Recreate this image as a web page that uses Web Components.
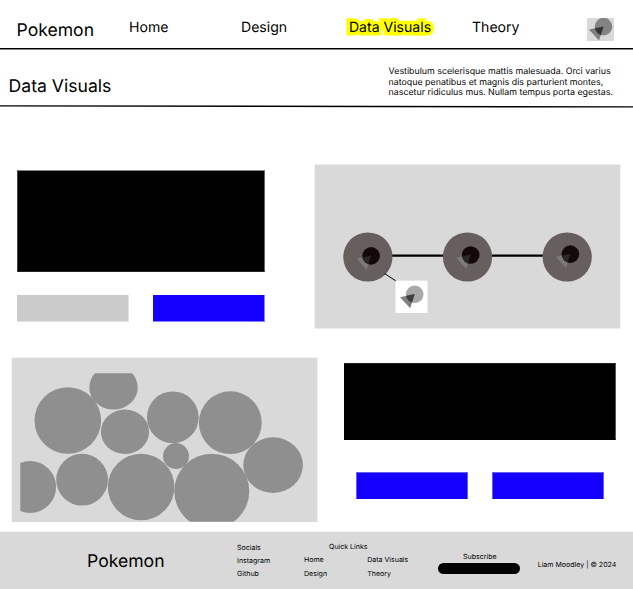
<!DOCTYPE html>
<html lang="en">
<head>
<meta charset="utf-8">
<title>Pokemon – Data Visuals</title>
<style>
html,body{margin:0;background:#fff;color:#000;font-family:Inter,"Liberation Sans",sans-serif;text-rendering:geometricPrecision}
body{width:633px;height:589px;overflow:hidden}
</style>
</head>
<body>
<pk-page></pk-page>
<script>
const define = (name, html) => customElements.define(name, class extends HTMLElement {
  constructor() {
    super();
    this.attachShadow({mode: 'open'});
    const t = document.createElement('template');
    t.innerHTML = html;
    this.shadowRoot.append(t.content.cloneNode(true));
  }
});

define('pk-logo', `<style>:host{display:block;font-size:17.6px;line-height:22px;white-space:nowrap}</style><slot></slot>`);

define('pk-emblem', `<style>:host{display:block;width:27px;height:23px}svg{display:block}</style>
<svg width="27" height="23" viewBox="587 18 27 23">
<clipPath id="c"><circle cx="603.5" cy="26.6" r="8.8"/></clipPath>
<rect x="587" y="18" width="27" height="23" fill="#d9d9d9"/>
<circle cx="603.5" cy="26.6" r="8.8" fill="#848484"/>
<path d="M589 29.4 603.6 26.6 599 40.6Z" fill="#7d7d7d"/>
<path d="M589 29.4 603.6 26.6 599 40.6Z" fill="#333" clip-path="url(#c)"/></svg>`);

define('pk-header', `<style>
:host{display:grid;box-sizing:border-box;height:50px;grid-template-columns:112px 112px 105px 126px 115px 27px;padding-left:17px;
border-bottom:1px solid #888;box-shadow:inset 0 -1px #000;font-size:14.08px;line-height:18px;align-items:start;white-space:nowrap}
pk-logo{margin-top:20px;margin-left:-.5px}span{padding-top:19px}pk-emblem{margin-top:18px}
svg{display:block;margin-top:14px}text{font:14.08px Inter,"Liberation Sans",sans-serif}
</style>
<pk-logo>Pokemon</pk-logo><span>Home</span><span>Design</span>
<svg width="100" height="26"><text x="2.9" y="18.3" fill="#000" stroke="#ff0" stroke-width="7" stroke-linejoin="miter" stroke-miterlimit="1.9" paint-order="stroke">Data Visuals</text></svg>
<span>Theory</span><pk-emblem></pk-emblem>`);

define('pk-intro', `<style>
:host{display:block;height:60px}
.row{display:grid;grid-template-columns:380px 1fr;padding-left:8.6px;height:54px}
h1{margin:26px 0 0;font-weight:400;font-size:17.6px;line-height:22px}
p{margin:17px 0 0;font-size:8.84px;line-height:10.6px;white-space:nowrap}
svg{display:block}
</style>
<div class="row"><h1>Data Visuals</h1><p>Vestibulum scelerisque mattis malesuada. Orci varius<br>natoque penatibus et magnis dis parturient montes,<br>nascetur ridiculus mus. Nullam tempus porta egestas.</p></div>
<svg width="633" height="6"><path d="M0 1.9 633 2.9" stroke="#000" stroke-width="1.4"/></svg>`);

define('pk-button', `<style>:host{display:block;box-sizing:border-box;width:112px;height:27px;background:#1400ff;border:solid #8a80ff;border-width:0 1px 1px 0}
:host([muted]){background:#cbcbcb;border-color:#e2e2e2}
:host([inset]){border-color:#6a60e8;border-width:1px 1px 0 1px}</style>`);

define('pk-card', `<style>:host{display:flex;flex-direction:column;align-items:center}
.block{box-sizing:border-box;width:var(--w);height:var(--h);background:#000;border:1px solid;border-color:var(--edges)}
.actions{display:flex;gap:24px;margin-top:var(--gap)}</style>
<div class="block"></div><div class="actions"><slot></slot></div>`);

const inner = (cx, cy, id) => {
  const d = `M${cx-14.4} ${cy+2.7} ${cx} ${cy-.4} ${cx-4.4} ${cy+14}Z`;
  return `<clipPath id="${id}"><circle cx="${cx}" cy="${cy}" r="8.8"/></clipPath>
<path d="${d}" fill="#7c7b7b"/><circle cx="${cx}" cy="${cy}" r="8.8" fill="#140809"/><path d="${d}" fill="#292828" clip-path="url(#${id})"/>`;
};
define('pk-evolution', `<style>:host{display:block}svg{display:block}</style>
<svg width="307" height="165" viewBox="314 164 307 165">
<rect x="314.65" y="164.5" width="305.7" height="164" fill="#d9d9d9"/>
<path d="M368 255.6H567" stroke="#000" stroke-width="2.2"/>
<g fill="#675e5e"><circle cx="367.9" cy="257" r="24.6"/><circle cx="467.5" cy="257" r="24.6"/><circle cx="567.2" cy="257" r="24.6"/></g>
${inner(371.1,255.9,'a')}${inner(470.7,255,'b')}${inner(570.4,254.1,'d')}
<path d="M384.6 273.6 396 281" stroke="#000" stroke-width="1"/>
<rect x="395.5" y="280.6" width="32" height="32.4" fill="#fff"/>
<clipPath id="e"><circle cx="414.7" cy="294.3" r="8.8"/></clipPath>
<circle cx="414.7" cy="294.3" r="8.8" fill="#a9a9a9"/>
<path d="M400 297.2 414.7 294 410.2 308.2Z" fill="#808080"/>
<path d="M400 297.2 414.7 294 410.2 308.2Z" fill="#404040" clip-path="url(#e)"/></svg>`);

define('pk-bubbles', `<style>:host{display:block}svg{display:block}</style>
<svg width="307" height="165" viewBox="11 357 307 165">
<rect x="11.7" y="357.7" width="305.7" height="164.3" fill="#d9d9d9"/>
<clipPath id="f"><rect x="20.3" y="373.2" width="290" height="148.6"/></clipPath>
<g fill="#8f8f8f" clip-path="url(#f)">
<circle cx="67.8" cy="420.5" r="33.3"/><ellipse cx="113.5" cy="387.4" rx="24.2" ry="22.2"/>
<ellipse cx="125" cy="431.8" rx="24.1" ry="22.2"/><circle cx="172.8" cy="417.3" r="25.9"/>
<circle cx="230.3" cy="422.7" r="31.4"/><circle cx="176" cy="456.1" r="13"/>
<ellipse cx="273.1" cy="465.1" rx="29.8" ry="27.8"/><circle cx="30.2" cy="487" r="25.9"/>
<circle cx="82.1" cy="479.7" r="25.9"/><circle cx="141.1" cy="487" r="33.3"/><circle cx="211.8" cy="491.2" r="37.5"/></g></svg>`);

define('pk-footer', `<style>
:host{display:grid;box-sizing:border-box;height:58px;background:#d9d9d9;border-top:1px solid #f2f2f2;
grid-template-columns:150px 67px 134.4px 99.3px 1fr;padding-left:87px;font-size:7.04px;line-height:13.3px;white-space:nowrap;align-items:start}
pk-logo{margin-top:19px}.social{padding-top:8.6px}
.links{display:grid;grid-template-columns:63.2px 1fr;padding-top:8px}
.links b{font-weight:400;grid-column:1/3;padding-left:25px}
.sub{padding-top:17.5px;width:83px;text-align:center}.sub i{display:block;width:82px;height:11px;border-radius:6px;background:#000}
.copy{padding-top:26px}
</style>
<pk-logo>Pokemon</pk-logo>
<div class="social"><div>Socials</div><div>Instagram</div><div>Github</div></div>
<div class="links"><b>Quick Links</b><span>Home</span><span>Data Visuals</span><span>Design</span><span>Theory</span></div>
<div class="sub">Subscribe<i></i></div>
<div class="copy">Liam Moodley | © 2024</div>`);

define('pk-page', `<style>
:host{display:flex;flex-direction:column;height:589px}
main{flex:1;padding-top:54px}
.row{display:flex;align-items:flex-start;height:165px}
.row+.row{margin-top:28px}
.first{padding-left:17px;gap:49px}.second{padding-left:11px;gap:26px}
.first pk-card{--w:248px;--h:102px;--gap:23px;--edges:#888 #666 #222 #444;margin-top:6px}
.second pk-card{--w:272px;--h:77px;--gap:32px;--edges:#222 #555 #000 #000;margin-top:6px}
</style>
<pk-header></pk-header><pk-intro></pk-intro>
<main>
<div class="row first"><pk-card><pk-button muted></pk-button><pk-button></pk-button></pk-card><pk-evolution></pk-evolution></div>
<div class="row second"><pk-bubbles></pk-bubbles><pk-card><pk-button inset></pk-button><pk-button inset></pk-button></pk-card></div>
</main>
<pk-footer></pk-footer>`);
</script>
</body>
</html>
